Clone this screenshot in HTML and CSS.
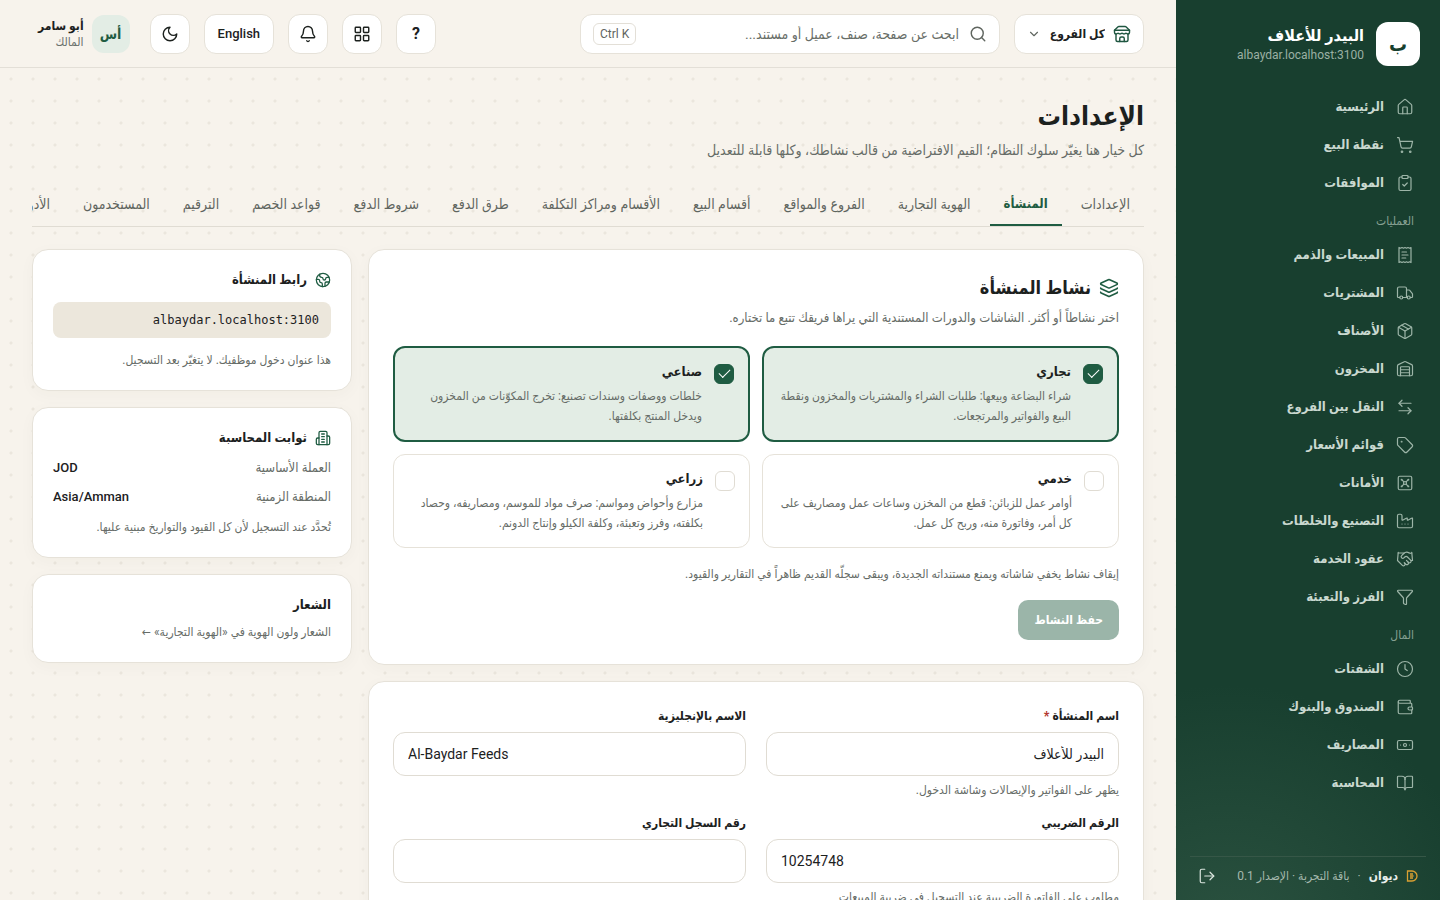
FILE: index.html
```html
<!DOCTYPE html>
<html lang="ar" dir="rtl">
<head>
<meta charset="UTF-8" />
<meta name="viewport" content="width=device-width, initial-scale=1" />
<title>الإعدادات - البيدر للأعلاف</title>
<link rel="stylesheet" href="styles.css">
</head>
<body>
<div class="app">
    <aside class="sidebar">
        <div class="brand">
            <div class="brand-logo">ب</div>
            <div class="brand-text">
                <strong>البيدر للأعلاف</strong>
                <span dir="ltr">albaydar.localhost:3100</span>
            </div>
        </div>

        <nav class="nav">
            <a href="#"><svg class="icon" viewBox="0 0 24 24"><path d="M15 21v-8a1 1 0 0 0-1-1h-4a1 1 0 0 0-1 1v8"/><path d="M3 10a2 2 0 0 1 .709-1.528l7-5.999a2 2 0 0 1 2.582 0l7 5.999A2 2 0 0 1 21 10v9a2 2 0 0 1-2 2H5a2 2 0 0 1-2-2z"/></svg>الرئيسية</a>
            <a href="#"><svg class="icon" viewBox="0 0 24 24"><circle cx="8" cy="21" r="1"/><circle cx="19" cy="21" r="1"/><path d="M2.05 2.05h2l2.66 12.42a2 2 0 0 0 2 1.58h9.78a2 2 0 0 0 1.95-1.57l1.65-7.43H5.12"/></svg>نقطة البيع</a>
            <a href="#"><svg class="icon" viewBox="0 0 24 24"><rect width="8" height="4" x="8" y="2" rx="1"/><path d="M16 4h2a2 2 0 0 1 2 2v14a2 2 0 0 1-2 2H6a2 2 0 0 1-2-2V6a2 2 0 0 1 2-2h2"/><path d="m9 14 2 2 4-4"/></svg>الموافقات</a>

            <h2>العمليات</h2>
            <a href="#"><svg class="icon" viewBox="0 0 24 24"><path d="M4 2v20l2-1 2 1 2-1 2 1 2-1 2 1 2-1 2 1V2l-2 1-2-1-2 1-2-1-2 1-2-1-2 1Z"/><path d="M14 8H8"/><path d="M16 12H8"/><path d="M13 16H8"/></svg>المبيعات والذمم</a>
            <a href="#"><svg class="icon" viewBox="0 0 24 24"><path d="M14 18V6a2 2 0 0 0-2-2H4a2 2 0 0 0-2 2v11a1 1 0 0 0 1 1h2"/><path d="M15 18H9"/><path d="M19 18h2a1 1 0 0 0 1-1v-3.65a1 1 0 0 0-.22-.624l-3.48-4.35A1 1 0 0 0 17.52 8H14"/><circle cx="17" cy="18" r="2"/><circle cx="7" cy="18" r="2"/></svg>المشتريات</a>
            <a href="#"><svg class="icon" viewBox="0 0 24 24"><path d="M11 21.73a2 2 0 0 0 2 0l7-4A2 2 0 0 0 21 16V8a2 2 0 0 0-1-1.73l-7-4a2 2 0 0 0-2 0l-7 4A2 2 0 0 0 3 8v8a2 2 0 0 0 1 1.73z"/><path d="M12 22V12"/><path d="m3.3 7 8.7 5 8.7-5"/><path d="m7.5 4.27 9 5.15"/></svg>الأصناف</a>
            <a href="#"><svg class="icon" viewBox="0 0 24 24"><path d="M18 21V10a1 1 0 0 0-1-1H7a1 1 0 0 0-1 1v11"/><path d="M22 19a2 2 0 0 1-2 2H4a2 2 0 0 1-2-2V8a2 2 0 0 1 1.132-1.803l7.95-3.974a2 2 0 0 1 1.837 0l7.948 3.974A2 2 0 0 1 22 8z"/><path d="M6 13h12"/><path d="M6 17h12"/></svg>المخزون</a>
            <a href="#"><svg class="icon" viewBox="0 0 24 24"><path d="M8 3 4 7l4 4"/><path d="M4 7h16"/><path d="m16 21 4-4-4-4"/><path d="M20 17H4"/></svg>النقل بين الفروع</a>
            <a href="#"><svg class="icon" viewBox="0 0 24 24"><path d="M12.586 2.586A2 2 0 0 0 11.172 2H4a2 2 0 0 0-2 2v7.172a2 2 0 0 0 .586 1.414l8.704 8.704a2.426 2.426 0 0 0 3.42 0l6.58-6.58a2.426 2.426 0 0 0 0-3.42z"/><circle cx="7.5" cy="7.5" r=".5"/></svg>قوائم الأسعار</a>
            <a href="#"><svg class="icon" viewBox="0 0 24 24"><rect width="18" height="18" x="3" y="3" rx="2"/><circle cx="7.5" cy="7.5" r=".5"/><path d="m7.9 7.9 2.7 2.7"/><circle cx="16.5" cy="7.5" r=".5"/><path d="m13.4 10.6 2.7-2.7"/><circle cx="7.5" cy="16.5" r=".5"/><path d="m7.9 16.1 2.7-2.7"/><circle cx="16.5" cy="16.5" r=".5"/><path d="m13.4 13.4 2.7 2.7"/><circle cx="12" cy="12" r="2"/></svg>الأمانات</a>
            <a href="#"><svg class="icon" viewBox="0 0 24 24"><path d="M12 16h.01"/><path d="M16 16h.01"/><path d="M8 16h.01"/><path d="M2 19a2 2 0 0 0 2 2h16a2 2 0 0 0 2-2V8.5a.5.5 0 0 0-.769-.422l-5.462 2.844A.5.5 0 0 1 15 10.5v-2a.5.5 0 0 0-.769-.422L8.77 10.922A.5.5 0 0 1 8 10.5V5a2 2 0 0 0-2-2H4a2 2 0 0 0-2 2z"/></svg>التصنيع والخلطات</a>
            <a href="#"><svg class="icon" viewBox="0 0 24 24"><path d="m11 17 2 2a1 1 0 1 0 3-3"/><path d="m14 14 2.5 2.5a1 1 0 1 0 3-3l-3.88-3.88a3 3 0 0 0-4.24 0l-.88.88a1 1 0 1 1-3-3l2.81-2.81a5.79 5.79 0 0 1 7.06-.87l.47.28a2 2 0 0 0 1.42.25L21 4"/><path d="m21 3 1 11h-2"/><path d="M3 3 2 14l6.5 6.5a1 1 0 1 0 3-3"/><path d="M3 4h8"/></svg>عقود الخدمة</a>
            <a href="#"><svg class="icon" viewBox="0 0 24 24"><path d="M10 20a1 1 0 0 0 .553.895l2 1A1 1 0 0 0 14 21v-7a2 2 0 0 1 .517-1.341L21.74 4.67A1 1 0 0 0 21 3H3a1 1 0 0 0-.742 1.67l7.225 7.989A2 2 0 0 1 10 14z"/></svg>الفرز والتعبئة</a>

            <h2>المال</h2>
            <a href="#"><svg class="icon" viewBox="0 0 24 24"><circle cx="12" cy="12" r="10"/><path d="M12 6v6l3 2"/></svg>الشفتات</a>
            <a href="#"><svg class="icon" viewBox="0 0 24 24"><path d="M19 7V4a1 1 0 0 0-1-1H5a2 2 0 0 0 0 4h15a1 1 0 0 1 1 1v4h-3a2 2 0 0 0 0 4h3a1 1 0 0 0 1-1v-2a1 1 0 0 0-1-1"/><path d="M3 5v14a2 2 0 0 0 2 2h15a1 1 0 0 0 1-1v-4"/></svg>الصندوق والبنوك</a>
            <a href="#"><svg class="icon" viewBox="0 0 24 24"><rect width="20" height="12" x="2" y="6" rx="2"/><circle cx="12" cy="12" r="2"/><path d="M6 12h.01M18 12h.01"/></svg>المصاريف</a>
            <a href="#"><svg class="icon" viewBox="0 0 24 24"><path d="M12 7v14"/><path d="M3 18a1 1 0 0 1-1-1V4a1 1 0 0 1 1-1h5a4 4 0 0 1 4 4 4 4 0 0 1 4-4h5a1 1 0 0 1 1 1v13a1 1 0 0 1-1 1h-6a3 3 0 0 0-3 3 3 3 0 0 0-3-3z"/></svg>المحاسبة</a>
        </nav>

        <div class="sidebar-footer">
            <svg class="diwan" viewBox="0 0 12 12"><path d="M1.500 1h4.500a5 5 0 0 1 0 10H1.500z"/><path d="M4 4h3M4 6h3.500M4 8h3"/></svg>
            <strong>ديوان</strong>
            <span>·</span>
            <span>باقة التجربة · الإصدار 0.1</span>
            <button type="button" class="logout" aria-label="تسجيل الخروج"><svg class="icon" viewBox="0 0 24 24"><path d="M9 21H5a2 2 0 0 1-2-2V5a2 2 0 0 1 2-2h4"/><path d="m16 17 5-5-5-5"/><path d="M21 12H9"/></svg></button>
        </div>
    </aside>

    <div class="main">
        <header class="topbar">
            <label class="branch">
                <svg class="icon" viewBox="0 0 24 24"><path d="m2 7 4.410-4.410A2 2 0 0 1 7.830 2h8.340a2 2 0 0 1 1.420.590L22 7"/><path d="M4 12v8a2 2 0 0 0 2 2h12a2 2 0 0 0 2-2v-8"/><path d="M15 22v-4a2 2 0 0 0-2-2h-2a2 2 0 0 0-2 2v4"/><path d="M2 7h20v3a2 2 0 0 1-2 2c-1.500 0-2-1-2.700-1S15.500 12 14.600 12 13 11 12 11s-1.700 1-2.600 1-2-1-2.700-1S5.500 12 4 12a2 2 0 0 1-2-2z"/></svg>
                <select aria-label="الفرع"><option>كل الفروع</option></select>
                <svg class="icon chevron" viewBox="0 0 24 24"><path d="m6 9 6 6 6-6"/></svg>
            </label>
            <label class="search">
                <svg class="icon" viewBox="0 0 24 24"><circle cx="11" cy="11" r="8"/><path d="m21 21-4.300-4.300"/></svg>
                <input type="text" aria-label="بحث" placeholder="ابحث عن صفحة، صنف، عميل أو مستند...">
                <kbd dir="ltr">Ctrl K</kbd>
            </label>
            <div class="actions">
                <button type="button" class="btn-help">?</button>
                <button type="button" aria-label="التطبيقات"><svg class="icon" viewBox="0 0 24 24"><rect width="7" height="7" x="3" y="3" rx="1"/><rect width="7" height="7" x="14" y="3" rx="1"/><rect width="7" height="7" x="14" y="14" rx="1"/><rect width="7" height="7" x="3" y="14" rx="1"/></svg></button>
                <button type="button" aria-label="الإشعارات"><svg class="icon" viewBox="0 0 24 24"><path d="M10.268 21a2 2 0 0 0 3.464 0"/><path d="M3.262 15.326A1 1 0 0 0 4 17h16a1 1 0 0 0 .74-1.673C19.410 13.956 18 12.499 18 8A6 6 0 0 0 6 8c0 4.499-1.411 5.956-2.738 7.326"/></svg></button>
                <button type="button" class="btn-lang">English</button>
                <button type="button" aria-label="الوضع الداكن"><svg class="icon" viewBox="0 0 24 24"><path d="M12 3a6 6 0 0 0 9 9 9 9 0 1 1-9-9Z"/></svg></button>
            </div>
            <button type="button" class="user">
                <span class="avatar">أس</span>
                <span class="user-text"><strong>أبو سامر</strong><span>المالك</span></span>
            </button>
        </header>

        <main class="page">
            <h1>الإعدادات</h1>
            <p class="lead">كل خيار هنا يغيّر سلوك النظام؛ القيم الافتراضية من قالب نشاطك، وكلها قابلة للتعديل</p>

            <nav class="tabs">
                <a href="#">الإعدادات</a>
                <a href="#" class="active">المنشأة</a>
                <a href="#">الهوية التجارية</a>
                <a href="#">الفروع والمواقع</a>
                <a href="#">أقسام البيع</a>
                <a href="#">الأقسام ومراكز التكلفة</a>
                <a href="#">طرق الدفع</a>
                <a href="#">شروط الدفع</a>
                <a href="#">قواعد الخصم</a>
                <a href="#">الترقيم</a>
                <a href="#">المستخدمون</a>
                <a href="#">الأدوار</a>
            </nav>

            <div class="layout">
                <div class="column">
                    <section class="card">
                        <h2 class="card-title"><svg class="icon" viewBox="0 0 24 24"><path d="M12.830 2.180a2 2 0 0 0-1.660 0L2.600 6.080a1 1 0 0 0 0 1.830l8.580 3.910a2 2 0 0 0 1.660 0l8.580-3.900a1 1 0 0 0 0-1.830z"/><path d="M2 12a1 1 0 0 0 .580.910l8.600 3.910a2 2 0 0 0 1.650 0l8.580-3.900A1 1 0 0 0 22 12"/><path d="M2 17a1 1 0 0 0 .580.910l8.600 3.910a2 2 0 0 0 1.650 0l8.580-3.900A1 1 0 0 0 22 17"/></svg>نشاط المنشأة</h2>
                        <p class="card-sub">اختر نشاطاً أو أكثر. الشاشات والدورات المستندية التي يراها فريقك تتبع ما تختاره.</p>

                        <div class="choices">
                            <label class="choice checked">
                                <input type="checkbox" checked>
                                <span><strong>تجاري</strong><small>شراء البضاعة وبيعها: طلبات الشراء والمشتريات والمخزون ونقطة البيع والفواتير والمرتجعات.</small></span>
                            </label>
                            <label class="choice checked">
                                <input type="checkbox" checked>
                                <span><strong>صناعي</strong><small>خلطات ووصفات وسندات تصنيع: تخرج المكوّنات من المخزون ويدخل المنتج بكلفتها.</small></span>
                            </label>
                            <label class="choice">
                                <input type="checkbox">
                                <span><strong>خدمي</strong><small>أوامر عمل للزبائن: قطع من المخزن وساعات عمل ومصاريف على كل أمر، وفاتورة منه، وربح كل عمل.</small></span>
                            </label>
                            <label class="choice">
                                <input type="checkbox">
                                <span><strong>زراعي</strong><small>مزارع وأحواض ومواسم: صرف مواد للموسم، ومصاريفه، وحصاد بكلفته، وفرز وتعبئة، وكلفة الكيلو وإنتاج الدونم.</small></span>
                            </label>
                        </div>

                        <p class="note">إيقاف نشاط يخفي شاشاته ويمنع مستنداته الجديدة، ويبقى سجلّه القديم ظاهراً في التقارير والقيود.</p>
                        <button type="button" class="btn-save" disabled>حفظ النشاط</button>
                    </section>

                    <section class="card form">
                        <div class="field">
                            <label for="name">اسم المنشأة <b>*</b></label>
                            <input id="name" type="text" value="البيدر للأعلاف">
                            <p class="hint">يظهر على الفواتير والإيصالات وشاشة الدخول.</p>
                        </div>
                        <div class="field">
                            <label for="name-en">الاسم بالإنجليزية</label>
                            <input id="name-en" type="text" dir="ltr" value="Al-Baydar Feeds">
                        </div>
                        <div class="field">
                            <label for="tax">الرقم الضريبي</label>
                            <input id="tax" type="text" dir="ltr" value="10254748">
                            <p class="hint">مطلوب على الفاتورة الضريبية عند التسجيل في ضريبة المبيعات</p>
                        </div>
                        <div class="field">
                            <label for="reg">رقم السجل التجاري</label>
                            <input id="reg" type="text" dir="ltr">
                        </div>
                    </section>
                </div>

                <aside class="column">
                    <section class="card side-card">
                        <h3><svg class="icon" viewBox="0 0 24 24"><path d="M21.540 15H17a2 2 0 0 0-2 2v4.540"/><path d="M7 3.340V5a3 3 0 0 0 3 3 2 2 0 0 1 2 2c0 1.100.900 2 2 2a2 2 0 0 0 2-2c0-1.100.900-2 2-2h3.170"/><path d="M11 21.950V18a2 2 0 0 0-2-2 2 2 0 0 1-2-2v-1a2 2 0 0 0-2-2H2.050"/><circle cx="12" cy="12" r="10"/></svg>رابط المنشأة</h3>
                        <code class="url">albaydar.localhost:3100</code>
                        <p class="hint">هذا عنوان دخول موظفيك. لا يتغيّر بعد التسجيل.</p>
                    </section>
                    <section class="card side-card">
                        <h3><svg class="icon" viewBox="0 0 24 24"><path d="M6 22V4a2 2 0 0 1 2-2h8a2 2 0 0 1 2 2v18Z"/><path d="M6 12H4a2 2 0 0 0-2 2v6a2 2 0 0 0 2 2h2"/><path d="M18 9h2a2 2 0 0 1 2 2v9a2 2 0 0 1-2 2h-2"/><path d="M10 6h4M10 10h4M10 14h4M10 18h4"/></svg>ثوابت المحاسبة</h3>
                        <dl>
                            <div><dt>العملة الأساسية</dt><dd>JOD</dd></div>
                            <div><dt>المنطقة الزمنية</dt><dd>Asia/Amman</dd></div>
                        </dl>
                        <p class="hint">تُحدَّد عند التسجيل لأن كل القيود والتواريخ مبنية عليها.</p>
                    </section>
                    <section class="card side-card">
                        <h3>الشعار</h3>
                        <p class="hint"><a href="#">الشعار ولون الهوية في «الهوية التجارية» ←</a></p>
                    </section>
                </aside>
            </div>
        </main>
    </div>
</div>
</body>
</html>
```

FILE: styles.css
```css
* {
    box-sizing: border-box;
}
body {
    margin: 0;
    background: #f7f3ec;
    color: #1c211e;
    font-family: Roboto, "DejaVu Sans Condensed", "DejaVu Sans", sans-serif;
    font-size: 14px;
    line-height: 20px;
}
h1, h2, h3, p, dl, dd {
    margin: 0;
}
a {
    color: inherit;
    text-decoration: none;
}
button, input, select {
    font: inherit;
    color: inherit;
}
button {
    cursor: pointer;
}
.icon {
    width: 18px;
    height: 18px;
    flex: none;
    fill: none;
    stroke: currentColor;
    stroke-width: 1.6;
    stroke-linecap: round;
    stroke-linejoin: round;
}
.app {
    display: flex;
    height: 100vh;
    overflow: hidden;
}

/* sidebar */
.sidebar {
    flex: none;
    width: 264px;
    display: flex;
    flex-direction: column;
    color: #c9d8cf;
    background: radial-gradient(circle at 20% 105%, #2b5240 0, #183f2f 260px);
}
.brand {
    display: flex;
    align-items: center;
    gap: 12px;
    padding: 22px 20px;
}
.brand-logo {
    display: grid;
    place-items: center;
    width: 44px;
    height: 44px;
    border-radius: 12px;
    background: #fff;
    color: #173f2e;
    font-size: 20px;
    font-weight: bold;
}
.brand-text {
    display: flex;
    flex-direction: column;
}
.brand-text strong {
    color: #fff;
    font-size: 16px;
    line-height: 22px;
}
.brand-text span {
    font-size: 12px;
    line-height: 16px;
    color: #9bb0a4;
    text-align: right;
}
.nav {
    flex: 1;
    min-height: 0;
    overflow: hidden;
    display: flex;
    flex-direction: column;
    gap: 2px;
    padding: 1px 14px;
}
.nav a {
    flex: none;
    display: flex;
    align-items: center;
    gap: 12px;
    height: 36px;
    padding: 0 12px;
    border-radius: 10px;
    font-size: 13px;
    font-weight: bold;
}
.nav a:hover {
    background: rgba(255, 255, 255, 0.06);
}
.nav .icon {
    color: #9db5a8;
}
.nav h2 {
    flex: none;
    padding: 8px 12px 4px;
    font-size: 12px;
    line-height: 20px;
    font-weight: normal;
    color: #86a092;
}
.sidebar-footer {
    display: flex;
    align-items: center;
    gap: 8px;
    height: 44px;
    margin: 0 14px;
    padding: 0 8px 6px;
    border-top: 1px solid #365747;
    font-size: 12px;
    color: #a5b9ae;
    white-space: nowrap;
}
.sidebar-footer strong {
    color: #e9efeb;
}
.diwan {
    width: 12px;
    height: 12px;
    fill: none;
    stroke: #d9a032;
    stroke-width: 1.3;
}
.logout {
    display: flex;
    margin-right: auto;
    padding: 0;
    border: 0;
    background: none;
    color: #dbe6df;
}

/* top bar */
.main {
    flex: 1;
    min-width: 0;
    display: flex;
    flex-direction: column;
}
.topbar {
    flex: none;
    display: flex;
    align-items: center;
    gap: 14px;
    height: 68px;
    padding: 0 32px;
    border-bottom: 1px solid #e3dfd7;
}
.topbar .icon, .card .icon {
    stroke-width: 1.9;
}
.branch, .search, .actions button {
    display: flex;
    align-items: center;
    height: 40px;
    border: 1px solid #e6e2d9;
    border-radius: 12px;
    background: #fff;
}
.branch {
    gap: 8px;
    padding: 0 12px;
    color: #1f5640;
}
.branch select {
    appearance: none;
    padding: 0;
    border: 0;
    background: none;
    color: #1c211e;
    font-size: 12px;
    font-weight: bold;
}
.branch .chevron {
    width: 14px;
    height: 14px;
    color: #5f655f;
}
.search {
    flex: 0 1 420px;
    gap: 10px;
    padding: 0 12px;
    color: #5f655f;
}
.search input {
    flex: 1;
    min-width: 0;
    padding: 0;
    border: 0;
    outline: 0;
    background: none;
    font-size: 14px;
}
.search input::placeholder {
    color: #686e68;
}
kbd {
    padding: 0 6px;
    border: 1px solid #e3dfd7;
    border-radius: 6px;
    font: inherit;
    font-size: 12px;
}
.actions {
    display: flex;
    gap: 14px;
    margin-right: auto;
}
.actions button {
    justify-content: center;
    width: 40px;
    padding: 0;
}
.actions .btn-help {
    font-size: 16px;
    font-weight: bold;
}
.actions .btn-lang {
    width: auto;
    padding: 0 13px;
    font-size: 13px;
    font-weight: 500;
}
.user {
    display: flex;
    align-items: center;
    gap: 8px;
    padding: 0 6px;
    border: 0;
    background: none;
}
.avatar {
    display: grid;
    place-items: center;
    width: 38px;
    height: 38px;
    border-radius: 12px;
    background: #e3ede5;
    color: #1f5c42;
    font-weight: bold;
}
.user-text {
    display: flex;
    flex-direction: column;
    text-align: right;
    font-size: 12px;
    line-height: 16px;
    color: #6b716c;
}
.user-text strong {
    color: #1c211e;
}

/* page */
.page {
    flex: 1;
    min-height: 0;
    overflow: hidden auto;
    scrollbar-width: none;
    padding: 32px;
    background: radial-gradient(circle, #ebe6dd 1px, transparent 2px) 0 0 / 22px 22px;
}
h1 {
    font-size: 26px;
    line-height: 32px;
}
.lead {
    margin-top: 8px;
    color: #666c67;
}
.tabs {
    display: flex;
    gap: 5px;
    margin: 24px 0 22px;
    overflow: hidden;
    border-bottom: 1px solid #e0dcd3;
}
.tabs a {
    flex: none;
    height: 42px;
    padding: 10px 14px;
    border-bottom: 2px solid transparent;
    color: #5f655f;
}
.tabs .active {
    border-color: #1f5c42;
    color: #1f5c42;
    font-size: 13px;
    font-weight: bold;
}
.layout {
    display: grid;
    grid-template-columns: minmax(0, 1fr) 320px;
    align-items: start;
    gap: 16px;
}
.column {
    display: grid;
    gap: 16px;
}
.card {
    padding: 24px;
    border: 1px solid #e6e2d9;
    border-radius: 16px;
    background: #fff;
    box-shadow: 0 4px 16px rgba(70, 60, 30, 0.03);
}
.card .icon {
    color: #1f5c42;
}
.card-title {
    display: flex;
    align-items: center;
    gap: 8px;
    font-size: 18px;
    line-height: 28px;
}
.card-title .icon {
    width: 20px;
    height: 20px;
}
.card-sub {
    margin: 6px 0 18px;
    font-size: 13px;
    color: #666c67;
}
.choices {
    display: grid;
    grid-template-columns: 1fr 1fr;
    gap: 12px;
}
.choice {
    display: flex;
    align-items: flex-start;
    gap: 12px;
    padding: 14px;
    border: 1px solid #e6e2d9;
    border-radius: 12px;
}
.choice.checked {
    border: 2px solid #1f5c42;
    background: #e3ede5;
}
.choice input {
    appearance: none;
    flex: none;
    display: grid;
    place-items: center;
    width: 20px;
    height: 20px;
    margin: 2px 0 0;
    border: 1px solid #e0dcd3;
    border-radius: 6px;
    background: #fff;
}
.choice input:checked {
    border-color: #1f5c42;
    background: #1f5c42;
}
.choice input:checked::before {
    content: "";
    width: 10px;
    height: 5px;
    margin-bottom: 4px;
    border: solid #fff;
    border-width: 0 0 1px 1px;
    transform: rotate(-45deg);
}
.choice strong, .choice small {
    display: block;
}
.choice strong {
    font-size: 13px;
}
.choice small {
    margin-top: 4px;
    font-size: 12px;
    color: #666c67;
}
.note {
    margin: 16px 0;
    font-size: 12px;
    color: #666c67;
}
.btn-save {
    height: 40px;
    padding: 0 16px;
    border: 0;
    border-radius: 10px;
    background: #9bb5a9;
    color: #fff;
    font-size: 12px;
    font-weight: bold;
}
.form {
    display: grid;
    grid-template-columns: 1fr 1fr;
    gap: 13px 20px;
}
.field label {
    display: block;
    margin-bottom: 6px;
    font-size: 12px;
    font-weight: bold;
}
.field b {
    color: #b3372f;
}
.field input {
    width: 100%;
    height: 44px;
    padding: 0 14px;
    border: 1px solid #e0dcd3;
    border-radius: 12px;
    background: #fff;
}
.hint {
    font-size: 12px;
    color: #666c67;
}
.field .hint {
    margin-top: 4px;
}

/* side column */
.side-card {
    padding: 20px;
}
.side-card h3 {
    display: flex;
    align-items: center;
    gap: 8px;
    font-size: 13px;
}
.side-card h3 .icon {
    width: 16px;
    height: 16px;
}
.url {
    display: block;
    margin: 12px 0;
    padding: 8px 12px;
    border-radius: 8px;
    background: #ece7dc;
    font-family: "DejaVu Sans Mono", monospace;
    font-size: 12px;
}
dl {
    margin: 10px 0;
    display: grid;
    gap: 9px;
}
dl div {
    display: flex;
    justify-content: space-between;
}
dt {
    font-size: 13px;
    color: #666c67;
}
dd {
    font-size: 13px;
    font-weight: 500;
}
.side-card h3 + .hint {
    margin-top: 7px;
}
```
